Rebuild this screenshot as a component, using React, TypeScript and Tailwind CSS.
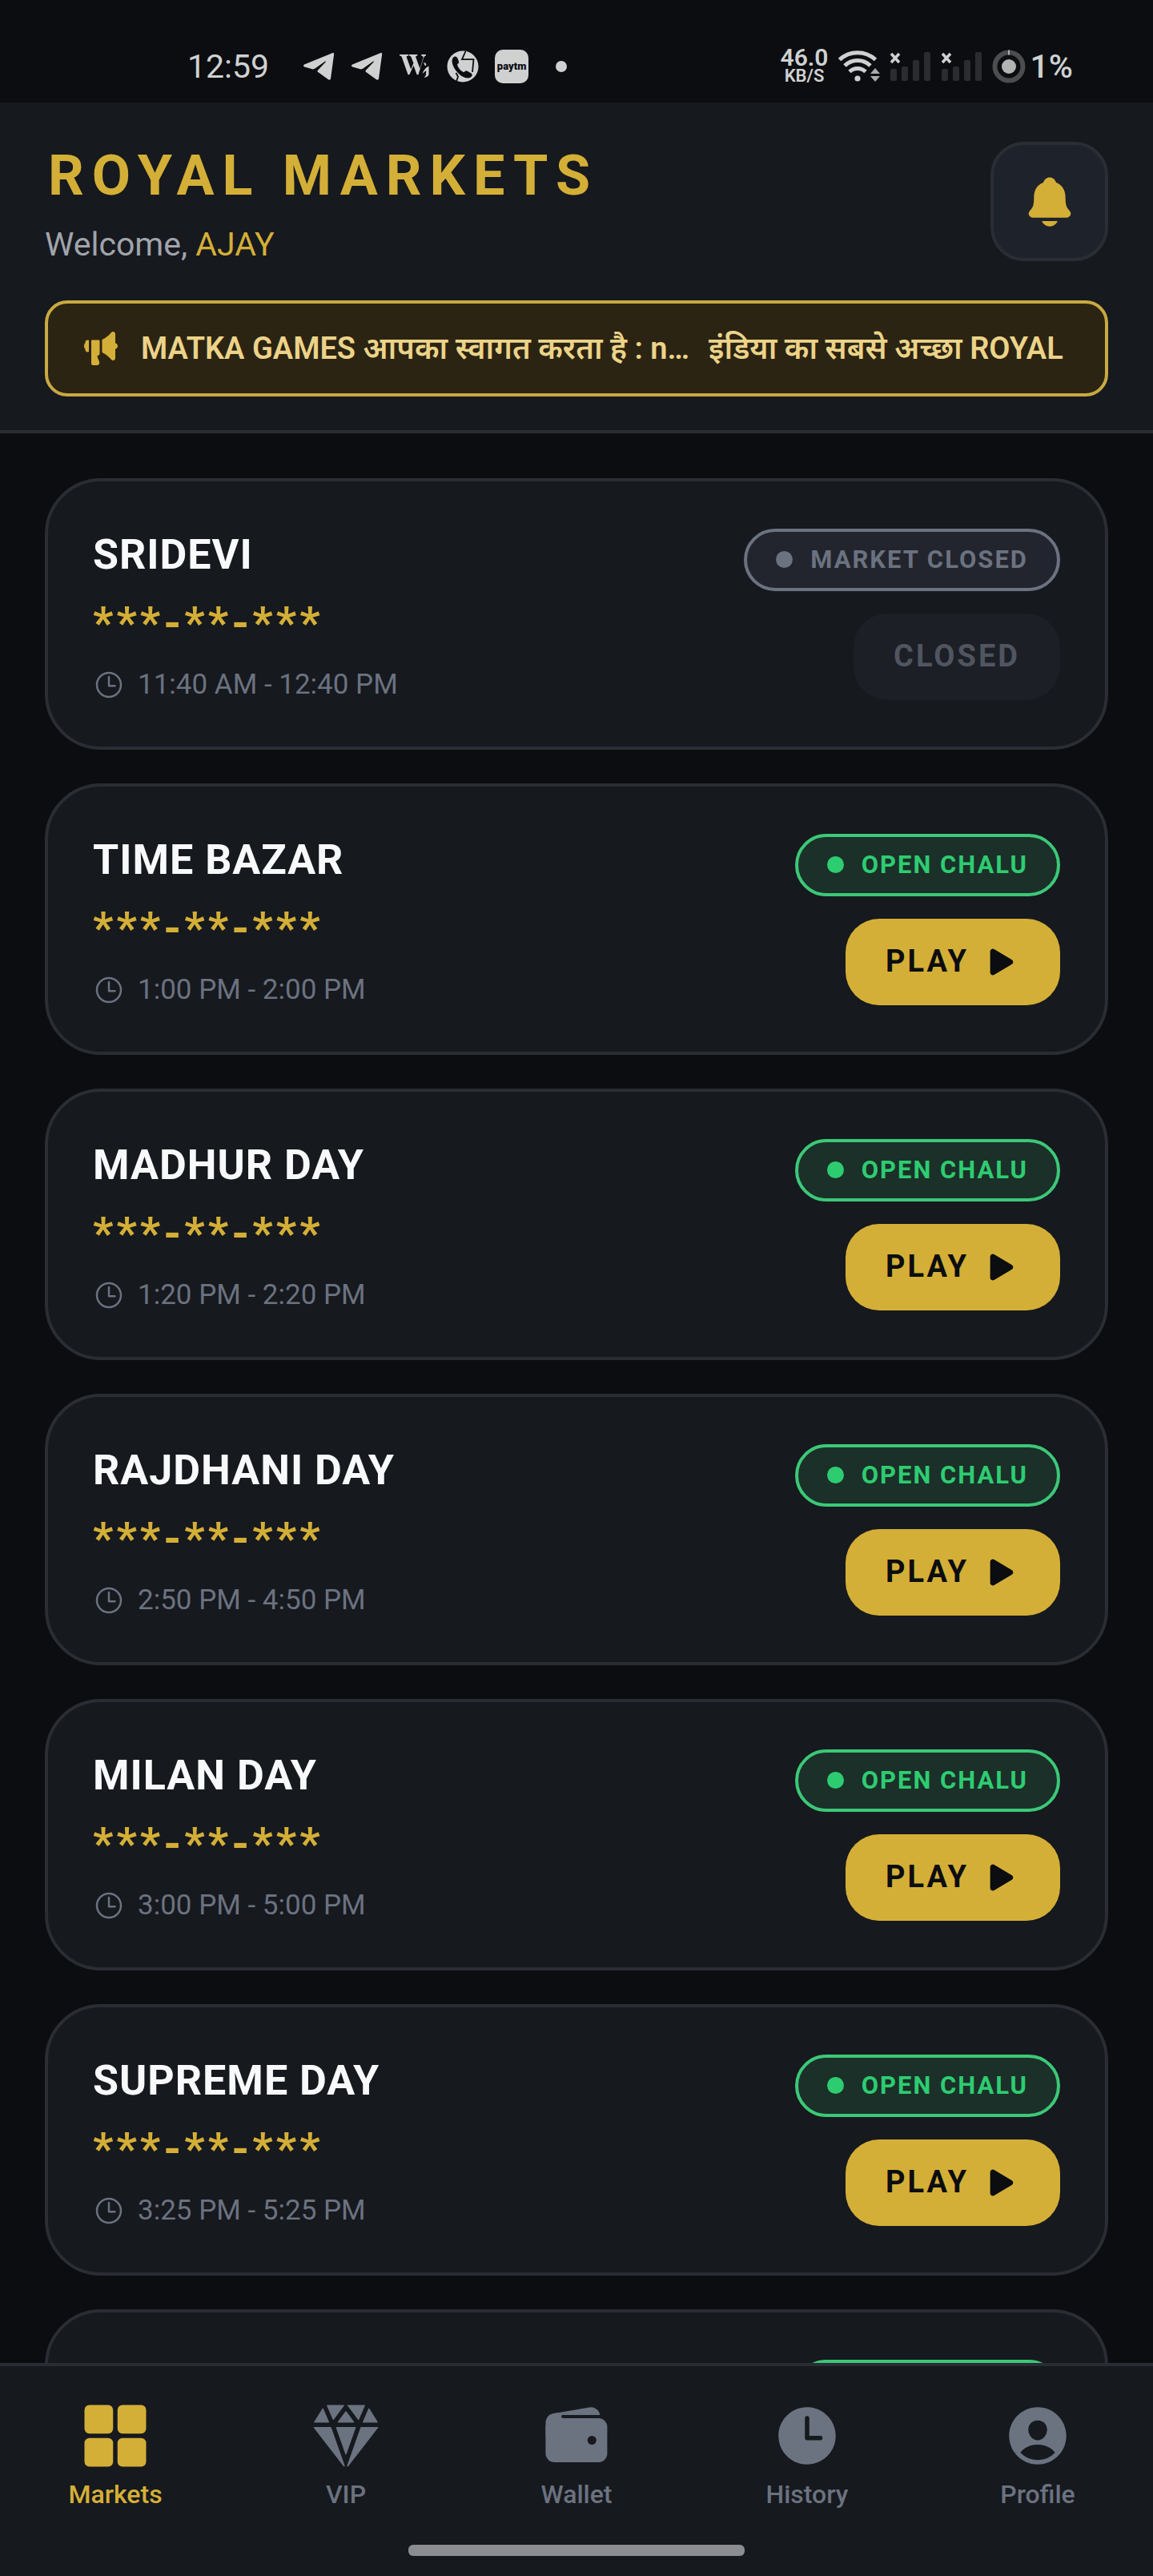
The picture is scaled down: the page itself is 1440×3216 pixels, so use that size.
import { clsx } from "clsx";
import type { IconType } from "react-icons";
import {
  IoDiamond,
  IoGrid,
  IoMegaphone,
  IoNotifications,
  IoPersonCircle,
  IoPlay,
  IoTime,
  IoTimeOutline,
  IoWallet,
} from "react-icons/io5";

type Market = {
  id: number;
  name: string;
  result: string;
  hours: string;
  open: boolean;
};

const markets: Market[] = [
  { id: 1, name: "SRIDEVI", result: "***-**-***", hours: "11:40 AM - 12:40 PM", open: false },
  { id: 2, name: "TIME BAZAR", result: "***-**-***", hours: "1:00 PM - 2:00 PM", open: true },
  { id: 3, name: "MADHUR DAY", result: "***-**-***", hours: "1:20 PM - 2:20 PM", open: true },
  { id: 4, name: "RAJDHANI DAY", result: "***-**-***", hours: "2:50 PM - 4:50 PM", open: true },
  { id: 5, name: "MILAN DAY", result: "***-**-***", hours: "3:00 PM - 5:00 PM", open: true },
  { id: 6, name: "SUPREME DAY", result: "***-**-***", hours: "3:25 PM - 5:25 PM", open: true },
  { id: 7, name: "", result: "", hours: "", open: true },
];

const tabs: { label: string; icon: IconType; active?: boolean }[] = [
  { label: "Markets", icon: IoGrid, active: true },
  { label: "VIP", icon: IoDiamond },
  { label: "Wallet", icon: IoWallet },
  { label: "History", icon: IoTime },
  { label: "Profile", icon: IoPersonCircle },
];

function TelegramIcon() {
  return (
    <svg className="h-10 w-10" viewBox="0 0 40 40" fill="currentColor" aria-hidden="true">
      <path d="M37 3.300c1.500-.6 2.300.1 2.100 1.600l-4 29.600c-.3 2.200-1.700 2.800-3.400 1.600l-12.500-9.200c-1-.8-1-1.600-.1-2.500l9.300-9.700c1-1.100.2-1.700-1-.8l-11.600 8.400c-1.500 1.100-3 1.400-4.800.8l-8.700-2.700c-1.700-.5-1.800-2.100-.2-2.900z" />
    </svg>
  );
}

function WikiIcon() {
  return (
    <svg className="h-10 w-10" viewBox="0 0 40 40" fill="currentColor" aria-hidden="true">
      <path d="M1 5h11v1.500c-2 .2-2.600.8-2 2.400l5.200 14.500 3.200-7.600-2.700-7c-.6-1.600-1.300-2.200-3-2.300V5h10.600v1.500c-2 .2-2.400.8-1.900 2.200l5 13.700 3.700-11.800c.9-2.700.4-3.900-1.900-4.100V5H34v1.500c-1.600.3-2.400 1.200-3.100 3.200l-6.500 20.600h-1.700l-4.200-11.500-5.200 11.500h-1.700L3.900 8.600C3.300 7 2.600 6.600 1 6.500z" />
      <path d="M31 15c2.600.6 3.700 1.600 3.200 3.200-.3.900-1.200 1-1.700.2zM37.500 19.500v10c0 2-2 3.600-6 4.500 1.600-1.500 2.500-3 2.600-5l.1-4-4.700 4c1.100-3.700 3.800-7.400 8-9.500z" />
    </svg>
  );
}

function PhoneBrowserIcon() {
  return (
    <svg className="h-10 w-10" viewBox="0 0 40 40" aria-hidden="true">
      <circle cx="20" cy="20" r="19.500" fill="currentColor" />
      <path
        d="M23.500 1 19 11.200h14.500L32 27M11.500 28l2.500 4.500L12 39"
        fill="none"
        stroke="#0b0d10"
        strokeWidth="1.800"
      />
      <path
        d="M8.200 8.500c2-1.700 4.400-1 5.400 1.500l1.300 3.600c.5 1.700-.2 2.900-1.800 3.800.8 4 4 7.800 8.300 9.800 1.400-1.700 2.700-2.200 4.300-1.400l4.400 2.400c2.300 1.400 2 3.700-.2 5.200-4.500 2.700-11.400-.4-16.700-6.200C7.500 21 4.500 12.500 8.200 8.500z"
        fill="#0b0d10"
      />
    </svg>
  );
}

function WifiIcon() {
  return (
    <svg className="h-11 w-[52px]" viewBox="0 0 52 44" fill="none" aria-hidden="true">
      <path d="M1.500 13.500a33 33 0 0 1 45 0" stroke="#cfd1d1" strokeWidth="5" />
      <path d="M8 21a23 23 0 0 1 32 0" stroke="#cfd1d1" strokeWidth="5" />
      <path d="M14 28.500a14.500 14.500 0 0 1 20 0" stroke="#cfd1d1" strokeWidth="5" />
      <circle cx="24" cy="37" r="3.600" fill="#cfd1d1" />
      <path d="M40 31l6-7 6 7zM40 34h12l-6 7z" fill="#a9abab" />
    </svg>
  );
}

function SignalIcon() {
  return (
    <svg className="h-11 w-[52px]" viewBox="0 0 52 44" aria-hidden="true">
      <path d="M2 6l10 11M12 6 2 17" stroke="#cfd1d1" strokeWidth="3.500" fill="none" />
      <g fill="#2b2c30">
        <rect x="1" y="25" width="8" height="15" rx="2" />
        <rect x="15" y="22" width="8" height="18" rx="2" />
        <rect x="29" y="14" width="8" height="26" rx="2" />
        <rect x="43" y="4" width="8" height="36" rx="2" />
      </g>
    </svg>
  );
}

function BatteryIcon() {
  return (
    <svg className="h-[42px] w-[42px]" viewBox="0 0 42 42" aria-hidden="true">
      <circle cx="21" cy="21" r="17.500" fill="none" stroke="#4c4d4f" strokeWidth="6" />
      <path d="M21 .5v6" stroke="#a9abab" strokeWidth="2" />
      <circle cx="21" cy="21" r="9" fill="#b2b3b3" />
    </svg>
  );
}

function StatusBar() {
  return (
    <div className="flex h-32 shrink-0 items-center justify-between pt-[38px] pr-[100px] pl-[234px] text-[#cfd1d1]">
      <div className="flex items-center">
        <span className="mr-[42px] text-[41px] leading-10">12:59</span>
        <div className="flex items-center gap-5">
          <TelegramIcon />
          <TelegramIcon />
          <WikiIcon />
          <PhoneBrowserIcon />
          <span className="flex h-[42px] w-[42px] items-center justify-center rounded-[10px] bg-[#cfd1d1] text-[13px] font-black text-[#0b0d10]">
            paytm
          </span>
        </div>
        <span className="ml-[34px] h-3.5 w-3.5 rounded-full bg-[#cfd1d1]" />
      </div>
      <div className="flex items-center">
        <div className="mr-3 text-center font-semibold">
          <div className="text-[30px] leading-6">46.0</div>
          <div className="text-[22px] leading-[22px]">KB/S</div>
        </div>
        <div className="flex items-center gap-3">
          <WifiIcon />
          <SignalIcon />
          <SignalIcon />
          <BatteryIcon />
        </div>
        <span className="ml-1.5 text-[41px] leading-10 font-medium">1%</span>
      </div>
    </div>
  );
}

function Header() {
  return (
    <header className="shrink-0 border-b-4 border-[#2a2d33] bg-[#16191e] px-14 pt-[49px] pb-[42px]">
      <div className="flex items-center justify-between">
        <div>
          <h1 className="pl-1 text-[70px] leading-[84px] font-bold tracking-[10px] text-[#d4af37]">
            ROYAL MARKETS
          </h1>
          <p className="mt-[23px] text-[41px] leading-[42px] text-[#a0a4ab]">
            Welcome, <span className="text-[#d4af37]">AJAY</span>
          </p>
        </div>
        <button
          type="button"
          aria-label="Notifications"
          className="flex h-[149px] w-[147px] items-center justify-center rounded-[42px] border-4 border-[#2a2d33] bg-[#1e222b] text-[#d4af37]"
        >
          <IoNotifications className="h-[70px] w-[70px]" />
        </button>
      </div>

      <div className="mt-[49px] flex h-[120px] items-center rounded-[28px] border-4 border-[#c9a941] bg-[#2b2413] px-[42px]">
        <IoMegaphone className="mr-[26px] h-12 w-12 shrink-0 text-[#d4af37]" />
        <div className="flex min-w-0 flex-1 gap-6 overflow-hidden text-[38px] leading-[60px] font-semibold whitespace-nowrap text-[#ecd388]">
          <span>MATKA GAMES आपका स्वागत करता है : n…</span>
          <span>इंडिया का सबसे अच्छा ROYAL M</span>
        </div>
      </div>
    </header>
  );
}

function StatusPill({ open }: { open: boolean }) {
  return (
    <span
      className={clsx(
        "flex items-center gap-[22px] rounded-full border-4 px-9 py-4 text-[31px] leading-[38px] font-bold tracking-[2px]",
        open
          ? "border-[#3cc878] bg-[#1b3029] text-[#2ecc71]"
          : "border-[#6b7280] bg-[#22252d] text-[#6b7280]"
      )}
    >
      <span className={clsx("h-[21px] w-[21px] rounded-full", open ? "bg-[#2ecc71]" : "bg-[#6b7280]")} />
      {open ? "OPEN CHALU" : "MARKET CLOSED"}
    </span>
  );
}

function MarketCard({ market }: { market: Market }) {
  return (
    <li className="flex items-center justify-between rounded-[70px] border-4 border-[#2a2d33] bg-[#16191e] p-14">
      <div className="min-h-[219px]">
        <h2 className="text-[52px] leading-[72px] font-bold tracking-[1px] text-[#f8f9fb]">{market.name}</h2>
        <p className="mt-5 text-[56px] leading-[58px] font-bold tracking-[4px] text-[#d4af37]">{market.result}</p>
        {market.hours && (
          <p className="mt-[27px] flex items-center gap-4 text-[35px] leading-[42px] text-[#6b7280]">
            <IoTimeOutline className="h-10 w-10" />
            {market.hours}
          </p>
        )}
      </div>
      <div className="flex flex-col items-end gap-7">
        <StatusPill open={market.open} />
        {market.open ? (
          <button
            type="button"
            className="flex h-[108px] items-center gap-[18px] rounded-[42px] bg-[#d4af37] px-[50px] text-[38px] font-bold tracking-[3px] text-[#0b0d10]"
          >
            PLAY
            <IoPlay className="h-[46px] w-[46px]" />
          </button>
        ) : (
          <button
            type="button"
            disabled
            className="flex h-[108px] items-center rounded-[42px] bg-[#1c1f26] px-[50px] text-[38px] font-bold tracking-[3px] text-[#505560]"
          >
            CLOSED
          </button>
        )}
      </div>
    </li>
  );
}

function TabBar() {
  return (
    <nav className="flex shrink-0 flex-col items-center border-t-4 border-[#2a2d33] bg-[#16191e] pt-[43px] pb-[25px]">
      <div className="grid w-full grid-cols-5">
        {tabs.map(({ label, icon: Icon, active }) => (
          <a
            key={label}
            href="#"
            className={clsx(
              "flex flex-col items-center gap-2 text-[32px] leading-[42px] font-medium",
              active ? "text-[#d4af37]" : "text-[#6b7280]"
            )}
          >
            <Icon className="h-[88px] w-[88px]" />
            {label}
          </a>
        ))}
      </div>
      <div className="mt-[42px] h-3.5 w-[420px] rounded-md bg-[#8c8d90]" />
    </nav>
  );
}

export default function App() {
  return (
    <div className="flex h-screen flex-col bg-[#0b0d10] font-[Roboto,'Noto_Sans',sans-serif]">
      <StatusBar />
      <Header />
      <main className="min-h-0 flex-1 overflow-hidden px-14 pt-14">
        <ul className="flex flex-col gap-[42px]">
          {markets.map((market) => (
            <MarketCard key={market.id} market={market} />
          ))}
        </ul>
      </main>
      <TabBar />
    </div>
  );
}
